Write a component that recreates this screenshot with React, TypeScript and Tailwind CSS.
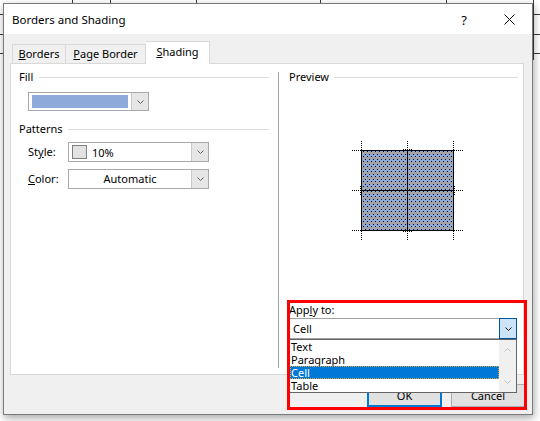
import React from "react";

function Chevron({ color = "#5f5f5f" }: { color?: string }) {
  return (
    <svg width="7" height="4" viewBox="0 0 7 4" className="block">
      <path d="M0.5 0.5 L3.5 3.5 L6.5 0.5" fill="none" stroke={color} strokeWidth="1" />
    </svg>
  );
}

function ChevronUp({ color = "#c2c2c2" }: { color?: string }) {
  return (
    <svg width="7" height="4" viewBox="0 0 7 4" className="block">
      <path d="M0.5 3.5 L3.5 0.5 L6.5 3.5" fill="none" stroke={color} strokeWidth="1" />
    </svg>
  );
}

function PreviewGraphic() {
  const dot = { stroke: "#000", strokeWidth: 1, strokeDasharray: "1 1" };
  return (
    <svg width="112" height="100" viewBox="0 0 112 100" shapeRendering="crispEdges" className="block">
      <defs>
        <pattern id="shade" width="4" height="5" patternUnits="userSpaceOnUse" x="10" y="10">
          <rect width="4" height="5" fill="#8eaadb" />
          <rect y="1" width="4" height="2" fill="#a3a3a3" />
          <rect x="1" y="0" width="1" height="1" fill="#000" />
          <rect x="3" y="3" width="1" height="1" fill="#000" />
        </pattern>
      </defs>
      <rect x="9" y="9" width="93" height="81" fill="url(#shade)" />
      <rect x="9.5" y="9.5" width="92" height="80" fill="none" stroke="#000" />
      <line x1="55.5" y1="9" x2="55.5" y2="90" stroke="#000" />
      <line x1="9" y1="49.5" x2="102" y2="49.5" stroke="#000" />
      {[9.5, 49.5, 89.5].map((y) => (
        <g key={"h" + y}>
          <line x1="0" y1={y} x2="9" y2={y} {...dot} />
          <line x1="102" y1={y} x2="112" y2={y} {...dot} />
        </g>
      ))}
      {[9.5, 55.5, 101.5].map((x) => (
        <g key={"v" + x}>
          <line x1={x} y1="0" x2={x} y2="9" {...dot} />
          <line x1={x} y1="90" x2={x} y2="100" {...dot} />
        </g>
      ))}
      <line x1="51" y1="8.5" x2="60" y2="8.5" {...dot} />
      <line x1="51" y1="90.5" x2="60" y2="90.5" {...dot} />
      <line x1="8.5" y1="45" x2="8.5" y2="54" {...dot} />
      <line x1="102.5" y1="45" x2="102.5" y2="54" {...dot} />
    </svg>
  );
}

export default function App() {
  return (
    <div className="relative w-[540px] h-[421px] overflow-hidden bg-white text-[11px] leading-[16px] text-black [font-family:'Segoe_UI','Noto_Sans',sans-serif]">
      {/* document grid behind the dialog */}
      {[14, 34, 53].map((y) => (
        <div key={"gy" + y} className="absolute left-0 right-0 h-px bg-[#3a3a3a]" style={{ top: y }} />
      ))}
      {[72, 110, 196, 320, 446, 533].map((x) => (
        <div key={"gx" + x} className="absolute top-0 h-[60px] w-px bg-[#3a3a3a]" style={{ left: x }} />
      ))}

      {/* dialog window */}
      <div className="absolute left-[3px] top-[3px] w-[530px] h-[412px] flex flex-col border border-[#7a7a7a] bg-[#f0f0f0] shadow-[1px_3px_8px_rgba(0,0,0,0.35)]">
        {/* title bar */}
        <div className="h-[30px] bg-white flex items-center pl-[8px] shrink-0">
          <span className="text-[11.5px] pt-[1px]">Borders and Shading</span>
          <span className="ml-auto mr-[37px] text-[13px] pt-[1px]">?</span>
          <svg width="11" height="11" viewBox="0 0 11 11" className="mr-[17px]">
            <path d="M0.5 0.5 L10.5 10.5 M10.5 0.5 L0.5 10.5" stroke="#000" strokeWidth="1" fill="none" />
          </svg>
        </div>

        {/* body */}
        <div className="flex-1 flex flex-col pt-[7px]">
          {/* tabs */}
          <div className="flex items-end h-[22px] pl-[8px] relative z-10">
            <div className="w-[54px] h-[19px] flex items-center justify-center border border-b-0 border-[#d9d9d9] bg-[#f0f0f0]">
              <span><span className="underline">B</span>orders</span>
            </div>
            <div className="w-[80px] h-[19px] flex items-center justify-center border border-b-0 border-l-0 border-[#d9d9d9] bg-[#f0f0f0]">
              <span><span className="underline">P</span>age Border</span>
            </div>
            <div className="w-[64px] h-[23px] -mb-px flex items-center justify-center border border-b-0 border-l-0 border-[#d9d9d9] bg-white pb-[2px]">
              <span><span className="underline">S</span>hading</span>
            </div>
          </div>

          {/* panel */}
          <div className="ml-[6px] w-[514px] h-[312px] border border-[#d9d9d9] bg-white flex">
            {/* left column */}
            <div className="w-[267px] pl-[8px] pr-[9px] flex flex-col">
              <div className="mt-[5px] h-[16px] flex items-center">
                <span>Fill</span>
                <div className="flex-1 h-px bg-[#dcdcdc] ml-[6px]" />
              </div>
              <div className="mt-[7px] ml-[9px] w-[121px] h-[19px] border border-[#a9a9a9] bg-white flex items-stretch">
                <div className="my-[2px] ml-[3px] w-[96px] bg-[#8eaadb]" />
                <div className="ml-auto w-[17px] bg-[#e6e6e6] border-l border-[#c8c8c8] flex items-center justify-center">
                  <Chevron />
                </div>
              </div>
              <div className="mt-[10px] h-[16px] flex items-center">
                <span>Patterns</span>
                <div className="flex-1 h-px bg-[#dcdcdc] ml-[5px]" />
              </div>
              <div className="mt-[5px] ml-[9px] flex items-center">
                <span className="w-[40px]">
                  St<span className="underline">y</span>le:
                </span>
                <div className="w-[141px] h-[20px] border border-[#a9a9a9] bg-white flex items-center">
                  <div className="ml-[3px] w-[15px] h-[14px] bg-[#e3e3e3] border border-[#7f7f7f]" />
                  <span className="ml-[5px] pt-[2px]">10%</span>
                  <div className="ml-auto self-stretch w-[17px] bg-[#e6e6e6] border-l border-[#c8c8c8] flex items-center justify-center">
                    <Chevron />
                  </div>
                </div>
              </div>
              <div className="mt-[7px] ml-[9px] flex items-center">
                <span className="w-[40px]">
                  <span className="underline">C</span>olor:
                </span>
                <div className="w-[141px] h-[20px] border border-[#a9a9a9] bg-white flex items-center">
                  <span className="flex-1 text-center">Automatic</span>
                  <div className="self-stretch w-[17px] bg-[#e6e6e6] border-l border-[#c8c8c8] flex items-center justify-center">
                    <Chevron />
                  </div>
                </div>
              </div>
            </div>

            {/* separator */}
            <div className="w-px bg-[#a0a0a0] mt-[8px] mb-[6px]" />

            {/* right column */}
            <div className="flex-1 pl-[10px] pr-[5px] flex flex-col">
              <div className="mt-[5px] h-[16px] flex items-center">
                <span>Preview</span>
                <div className="flex-1 h-px bg-[#dcdcdc] ml-[5px]" />
              </div>
              <div className="mt-[56px] ml-[63px]">
                <PreviewGraphic />
              </div>
              <div className="mt-[61px] h-[16px] flex items-center">
                <span>
                  App<span className="underline">l</span>y to:
                </span>
              </div>
              <div className="relative w-[228px] h-[21px] border border-[#a0a0a0] bg-white flex items-center">
                <span className="ml-[3px]">Cell</span>
                <div className="ml-auto self-stretch w-[18px] -my-px -mr-px bg-[#cce4f7] border border-[#005499] flex items-center justify-center">
                  <Chevron color="#1a1a1a" />
                </div>
                {/* open dropdown list */}
                <div className="absolute left-[-1px] top-[20px] w-[228px] h-[54px] border border-[#646464] bg-white z-30 flex">
                  <div className="flex-1 flex flex-col leading-[13px]">
                    <div className="h-[13px] pl-[1px]">Text</div>
                    <div className="h-[13px] pl-[1px]">Paragraph</div>
                    <div className="h-[13px] bg-[#0078d7] text-white border border-dotted border-[#e6a23c] leading-[11px]">Cell</div>
                    <div className="h-[13px] pl-[1px]">Table</div>
                  </div>
                  <div className="w-[17px] bg-[#f0f0f0] flex flex-col items-center justify-between py-[8px]">
                    <ChevronUp />
                    <Chevron color="#c2c2c2" />
                  </div>
                </div>
              </div>
            </div>
          </div>

          {/* buttons */}
          <div className="mt-[9px] flex justify-end gap-[9px] pr-[7px]">
            <div className="w-[75px] h-[23px] border-2 border-[#0078d7] bg-[#e1e1e1] flex items-center justify-center">OK</div>
            <div className="w-[74px] h-[23px] border border-[#adadad] bg-[#e1e1e1] flex items-center justify-center">Cancel</div>
          </div>
        </div>
      </div>

      {/* red highlight frame */}
      <div className="absolute left-[287px] top-[300px] w-[240px] h-[110px] border-[3px] border-[#ff0000] z-40" />
    </div>
  );
}
